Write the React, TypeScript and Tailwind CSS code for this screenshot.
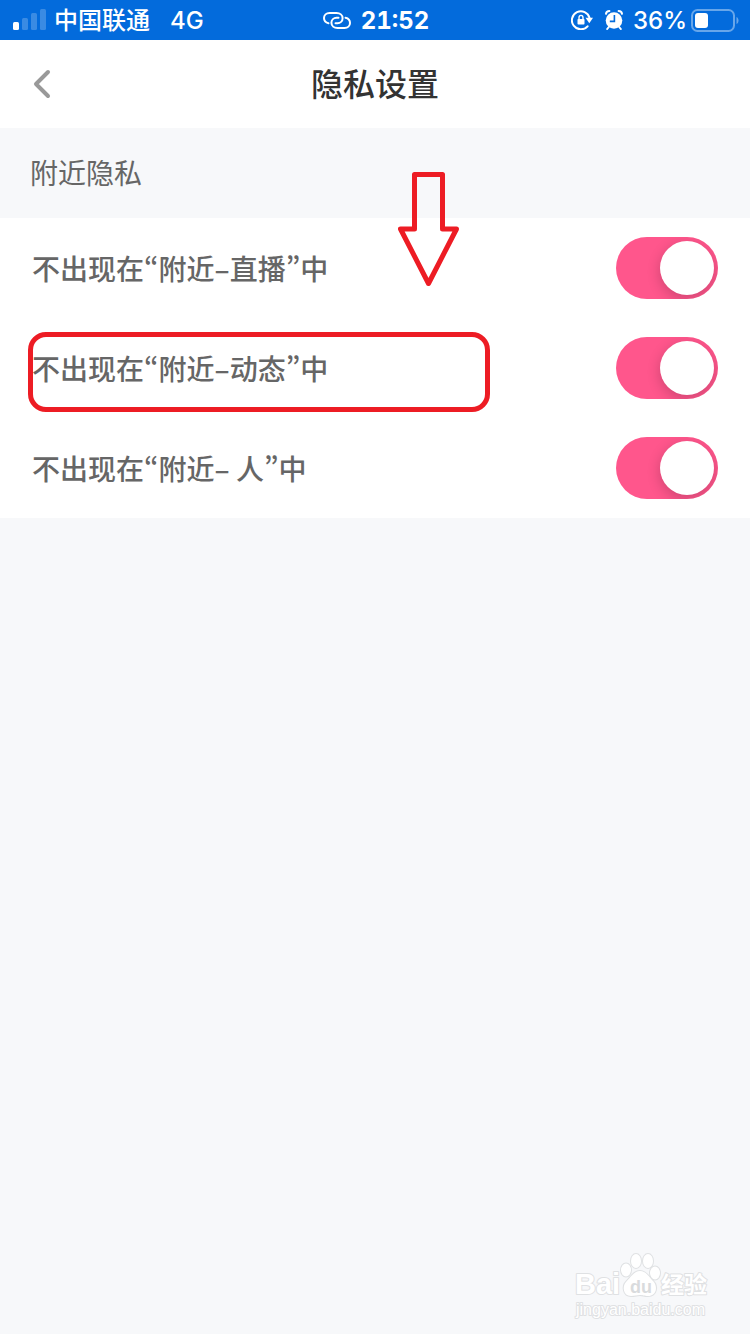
import { useState } from "react";

type Setting = {
  id: string;
  label: string;
  highlighted?: boolean;
};

const settings: Setting[] = [
  { id: "nearby-live", label: "不出现在“附近–直播”中" },
  { id: "nearby-moments", label: "不出现在“附近–动态”中", highlighted: true },
  { id: "nearby-people", label: "不出现在“附近– 人”中" },
];

function SignalIcon() {
  return (
    <svg width="33" height="22" viewBox="0 0 33 22" fill="#fff" aria-hidden="true">
      <rect x="0" y="13" width="6" height="8" rx="1.5" />
      <rect x="9" y="9" width="6" height="12" rx="1.5" opacity=".22" />
      <rect x="18" y="4" width="6" height="17" rx="1.5" opacity=".22" />
      <rect x="27" y="0" width="6" height="21" rx="1.5" opacity=".22" />
    </svg>
  );
}

function HotspotIcon() {
  return (
    <svg
      width="28"
      height="18"
      viewBox="0 0 28 18"
      fill="none"
      stroke="#fff"
      strokeWidth="2"
      strokeLinecap="round"
      aria-hidden="true"
    >
      <path d="M5.500 12.200C2.800 11.600 1 9.500 1 7C1 4 3.300 2 6.500 2H13.500C17 2 19.600 4.200 19.600 7.200C19.600 10.200 17.200 12.200 14.500 12.200H12.500" />
      <path d="M22.500 6.800C25.200 7.400 27 9.500 27 12C27 15 24.700 17 21.500 17H14.500C11 17 8.400 14.800 8.400 11.800C8.400 8.800 10.800 6.800 13.500 6.800H15.500" />
    </svg>
  );
}

function RotationLockIcon() {
  return (
    <svg width="22" height="20" viewBox="0 0 22 20" fill="none" aria-hidden="true">
      <path
        d="M16.600 16.300A9 9 0 1 1 18.600 8"
        stroke="#fff"
        strokeWidth="2"
        strokeLinecap="round"
      />
      <path d="M14.500 7.800H22L18.300 13.200Z" fill="#fff" />
      <rect x="6.500" y="9" width="7" height="5.600" rx=".8" fill="#fff" />
      <path d="M8 9.500V7.600a2 2.200 0 0 1 4 0V9.500" stroke="#fff" strokeWidth="1.400" />
    </svg>
  );
}

function AlarmIcon() {
  return (
    <svg width="18" height="20" viewBox="0 0 18 20" aria-hidden="true">
      <circle cx="9" cy="10.500" r="8.300" fill="#fff" />
      <path
        d="M1 3.800C1.200 2.200 2.600 1 4.400 1M17 3.800C16.800 2.200 15.400 1 13.600 1M3.800 17L2.200 19M14.200 17L15.800 19"
        fill="none"
        stroke="#fff"
        strokeWidth="2"
        strokeLinecap="round"
      />
      <path d="M9.400 5V11.400H4.800" fill="none" stroke="#036bdc" strokeWidth="1.600" />
    </svg>
  );
}

function BatteryIcon() {
  return (
    <svg width="48" height="23" viewBox="0 0 48 23" fill="none" aria-hidden="true">
      <rect x="1" y="1" width="42" height="21" rx="5.500" stroke="#fff" strokeWidth="2" opacity=".4" />
      <rect x="4" y="4" width="13" height="15" rx="3" fill="#fff" />
      <path d="M45.500 8C48.200 9 48.200 14 45.500 15Z" fill="#fff" opacity=".4" />
    </svg>
  );
}

function StatusBar() {
  return (
    <div className="grid h-10 grid-cols-[1fr_auto_1fr] items-center bg-[#036bdc] pr-[11px] pl-[13px] text-2xl font-medium text-white">
      <div className="flex items-center">
        <SignalIcon />
        <span className="ml-2 pt-0.5">中国联通</span>
        <span className="ml-5 pt-0.5">4G</span>
      </div>
      <div className="flex items-center gap-2.5">
        <HotspotIcon />
        <span className="pt-0.5 font-bold tabular-nums">21:52</span>
      </div>
      <div className="flex items-center justify-end">
        <RotationLockIcon />
        <span className="ml-3">
          <AlarmIcon />
        </span>
        <span className="ml-2.5 pt-0.5">36%</span>
        <span className="ml-1">
          <BatteryIcon />
        </span>
      </div>
    </div>
  );
}

function Header() {
  return (
    <header className="grid h-22 grid-cols-[1fr_auto_1fr] items-center bg-white px-8">
      <button type="button" aria-label="返回" className="justify-self-start">
        <svg
          width="20"
          height="30"
          viewBox="0 0 20 30"
          fill="none"
          stroke="#999"
          strokeWidth="4"
          strokeLinecap="round"
          strokeLinejoin="round"
        >
          <path d="M16 3L4 15L16 27" />
        </svg>
      </button>
      <h1 className="pt-0.5 text-[32px] font-medium text-[#333]">隐私设置</h1>
    </header>
  );
}

function SettingRow({ id, label, highlighted }: Setting) {
  const [checked, setChecked] = useState(true);

  return (
    <li className="relative flex h-25 items-center justify-between px-8">
      <label
        htmlFor={id}
        className="font-['Noto_Sans_CJK_SC',sans-serif] text-[28px] leading-10 font-medium text-[#666] [font-variant-east-asian:proportional-width]"
      >
        {label}
      </label>
      <input
        id={id}
        type="checkbox"
        role="switch"
        checked={checked}
        onChange={(e) => setChecked(e.target.checked)}
        className="flex h-[62px] w-[102px] appearance-none items-center justify-start overflow-hidden rounded-full bg-gray-200 px-1 before:size-[54px] before:rounded-full before:bg-white before:shadow-[0_4px_14px_rgba(0,0,0,0.2)] before:content-[''] checked:justify-end checked:bg-[#ff568c]"
      />
      {highlighted && (
        <div className="pointer-events-none absolute top-3.5 left-7 h-20 w-[462px] rounded-[18px] border-5 border-[#ed1c24]" />
      )}
    </li>
  );
}

function ArrowMark() {
  return (
    <svg
      className="pointer-events-none absolute top-11 left-[398px]"
      width="62"
      height="116"
      viewBox="0 0 62 116"
      fill="none"
      stroke="#ed1c24"
      strokeWidth="5"
      strokeLinejoin="round"
      aria-hidden="true"
    >
      <path d="M16.500 2.500H44.500V57H58.500L30.500 111.500L2.500 57H16.500Z" />
    </svg>
  );
}

function Watermark() {
  return (
    <svg
      className="absolute right-9 bottom-3 font-['Liberation_Sans','Noto_Sans_CJK_SC',sans-serif]"
      width="142"
      height="70"
      viewBox="0 0 142 70"
      fill="#fff"
      stroke="#dfe1e3"
      strokeWidth="2"
      paintOrder="stroke"
      strokeLinejoin="round"
      aria-label="Baidu 经验"
    >
      <text x="3" y="42" fontSize="29" fontWeight="700">
        Bai
      </text>
      <ellipse cx="54" cy="18" rx="5" ry="6.500" />
      <ellipse cx="64" cy="9" rx="5" ry="7" />
      <ellipse cx="76" cy="9" rx="5" ry="7" />
      <ellipse cx="83" cy="21" rx="5" ry="6.500" />
      <path d="M68 19C74 19 77 25 81 29C86 34 85 44 76 44C72 44 71 43 68 43C65 43 63 44 59 44C51 44 50 34 54 30C59 25 62 19 68 19Z" />
      <text x="58" y="41" fontSize="18" fontWeight="700" fill="#d9dbdd" stroke="none">
        du
      </text>
      <text x="89" y="41" fontSize="23" fontWeight="700">
        经验
      </text>
      <text x="4" y="63" fontSize="16">
        jingyan.baidu.com
      </text>
    </svg>
  );
}

export default function App() {
  return (
    <div className="relative flex min-h-screen flex-col bg-[#f7f8fa] font-['Inter','Noto_Sans_CJK_SC',sans-serif]">
      <StatusBar />
      <Header />
      <main className="relative">
        <h2 className="flex h-[90px] items-center px-[30px] pt-0.5 text-[28px] text-[#666]">附近隐私</h2>
        <ul className="bg-white">
          {settings.map((setting) => (
            <SettingRow key={setting.id} {...setting} />
          ))}
        </ul>
        <ArrowMark />
      </main>
      <Watermark />
    </div>
  );
}
